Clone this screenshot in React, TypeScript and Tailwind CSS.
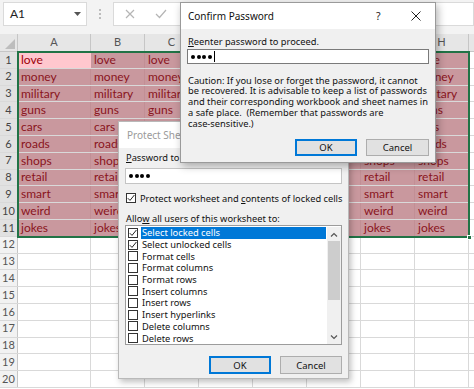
import React from "react";

const words = ["love", "money", "military", "guns", "cars", "roads", "shops", "retail", "smart", "weird", "jokes"];
const colWidths = [73, 54, 54, 54, 54, 54, 54, 54];
const colLetters = ["A", "B", "C", "D", "E", "F", "G", "H"];

const permissions = [
  { label: "Select locked cells", checked: true, active: true },
  { label: "Select unlocked cells", checked: true },
  { label: "Format cells" },
  { label: "Format columns" },
  { label: "Format rows" },
  { label: "Insert columns" },
  { label: "Insert rows" },
  { label: "Insert hyperlinks" },
  { label: "Delete columns" },
  { label: "Delete rows" },
];

const dialogFont = "[font-family:'Noto_Sans',sans-serif]";

function CheckBox({ checked }: { checked?: boolean }) {
  return (
    <span className="flex h-[10px] w-[10px] shrink-0 items-center justify-center border border-[#333333] bg-white">
      {checked && (
        <svg width="8" height="8" viewBox="0 0 8 8">
          <polyline points="0.8,4.2 3,6.4 7.4,1" fill="none" stroke="#222" strokeWidth="1" />
        </svg>
      )}
    </span>
  );
}

function DialogButton({ label, primary }: { label: string; primary?: boolean }) {
  return (
    <div
      className={`flex h-full w-full items-center justify-center bg-[#e1e1e1] text-[9.5px] text-[#111] ${
        primary ? "border-2 border-[#0078d7]" : "border border-[#adadad]"
      }`}
    >
      {label}
    </div>
  );
}

function PasswordDots({ caret }: { caret?: boolean }) {
  return (
    <div className="flex items-center gap-[1.5px] pl-[3px]">
      {[0, 1, 2, 3].map((i) => (
        <span key={i} className="h-[4px] w-[4px] rounded-full bg-black" />
      ))}
      {caret && <span className="ml-[1px] h-[11px] w-[1px] bg-black" />}
    </div>
  );
}

function Sheet() {
  return (
    <div className="flex flex-col">
      {/* name box + formula bar */}
      <div className="flex h-[34px] items-start bg-[#f3f3f3] pl-[3px] pt-[2px]">
        <div className="flex h-[24px] w-[84px] items-center justify-between border border-[#dadada] bg-white pl-[6px] pr-[5px] text-[12px] text-[#222]">
          <span>A1</span>
          <svg width="7" height="4" viewBox="0 0 7 4">
            <polygon points="0,0 7,0 3.5,4" fill="#555" />
          </svg>
        </div>
        <div className="flex h-[24px] w-[26px] flex-col items-center justify-center gap-[2px]">
          <span className="h-[2px] w-[2px] rounded-full bg-[#aaa]" />
          <span className="h-[2px] w-[2px] rounded-full bg-[#aaa]" />
          <span className="h-[2px] w-[2px] rounded-full bg-[#aaa]" />
        </div>
        <div className="flex h-[24px] flex-1 items-center border border-[#dadada] bg-white">
          <svg className="ml-[11px]" width="10" height="10" viewBox="0 0 10 10">
            <path d="M1 1 L9 9 M9 1 L1 9" stroke="#b5b5b5" strokeWidth="1.2" />
          </svg>
          <svg className="ml-[20px]" width="12" height="10" viewBox="0 0 12 10">
            <polyline points="1,5 4.5,8.5 11,1" fill="none" stroke="#b5b5b5" strokeWidth="1.2" />
          </svg>
        </div>
      </div>

      {/* column headers */}
      <div className="flex h-[18px] border-b border-[#c6c6c6] bg-[#e6e6e6] text-[11px] text-[#555]">
        <div className="relative w-[18px] shrink-0 border-r border-[#c6c6c6]">
          <svg className="absolute bottom-[2px] right-[2px]" width="10" height="10" viewBox="0 0 10 10">
            <polygon points="10,0 10,10 0,10" fill="#bdbdbd" />
          </svg>
        </div>
        {colWidths.map((w, i) => (
          <div
            key={i}
            className="flex shrink-0 items-center justify-center border-r border-[#c6c6c6]"
            style={{ width: w }}
          >
            {colLetters[i]}
          </div>
        ))}
        <div className="flex-1" />
      </div>

      {/* rows */}
      {Array.from({ length: 20 }).map((_, r) => {
        const selected = r < 11;
        return (
          <div key={r} className="flex h-[16.8px] border-b border-[#d9d9d9] text-[12px]">
            <div
              className={`flex w-[18px] shrink-0 items-center justify-center border-r border-[#c6c6c6] text-[11px] ${
                selected ? "bg-[#e1e1e1] text-[#444]" : "bg-[#f2f2f2] text-[#555]"
              }`}
            >
              {r + 1}
            </div>
            {colWidths.map((w, c) => {
              const isActive = r === 0 && c === 0;
              return (
                <div
                  key={c}
                  className={`flex shrink-0 items-center overflow-hidden whitespace-nowrap pl-[3px] ${
                    selected
                      ? isActive
                        ? "bg-[#ffc7ce] text-[#9c0006]"
                        : "border-r border-[#c28f95] bg-[#c9989e] text-[#8a1420]"
                      : "border-r border-[#d9d9d9]"
                  }`}
                  style={{ width: w }}
                >
                  {selected ? words[r] : ""}
                </div>
              );
            })}
            <div className="flex-1" />
          </div>
        );
      })}
    </div>
  );
}

function ProtectSheetDialog() {
  return (
    <div
      className={`absolute left-[118px] top-[121px] flex h-[258px] w-[231px] flex-col border border-[#b9b9b9] bg-[#f0f0f0] shadow-[2px_3px_6px_rgba(0,0,0,0.25)] ${dialogFont}`}
    >
      <div className="flex h-[26px] shrink-0 items-center bg-white pl-[8px] text-[10px] text-[#9a9a9a]">Protect Sheet</div>
      <div className="flex flex-col px-[6px] text-[9.3px] leading-[11px] text-[#111]">
        <div className="mt-[4px] whitespace-nowrap pl-[1px]">
          <span className="underline">P</span>assword to unprotect sheet:
        </div>
        <div className="mt-[5px] flex h-[16px] items-center border border-[#c4c4c4] bg-white">
          <PasswordDots />
        </div>
        <div className="mt-[8px] flex h-[12px] items-center gap-[4px] whitespace-nowrap pl-[1px]">
          <CheckBox checked />
          <span>
            Protect worksheet and <span className="underline">c</span>ontents of locked cells
          </span>
        </div>
        <div className="mt-[8.5px] whitespace-nowrap pl-[1px]">
          Allo<span className="underline">w</span> all users of this worksheet to:
        </div>
        <div className="mt-[1.5px] flex h-[120px] border border-[#9c9c9c] bg-white pt-[1px]">
          <div className="flex flex-1 flex-col">
            {permissions.map((p) => (
              <div key={p.label} className="flex h-[11.7px] items-center gap-[3px] pl-[2px]">
                <CheckBox checked={p.checked} />
                <span
                  className={`flex h-full flex-1 items-center whitespace-nowrap pl-[1px] ${
                    p.active ? "bg-[#0078d7] text-white" : ""
                  }`}
                >
                  {p.label}
                </span>
              </div>
            ))}
          </div>
          <div className="ml-[1px] flex w-[14px] flex-col bg-[#f0f0f0]">
            <div className="flex h-[14px] items-center justify-center">
              <svg width="8" height="5" viewBox="0 0 8 5">
                <polyline points="1,4.5 4,1.5 7,4.5" fill="none" stroke="#555" strokeWidth="1.2" />
              </svg>
            </div>
            <div className="mx-[1px] h-[59px] bg-[#cdcdcd]" />
            <div className="flex-1" />
            <div className="flex h-[14px] items-center justify-center">
              <svg width="8" height="5" viewBox="0 0 8 5">
                <polyline points="1,0.5 4,3.5 7,0.5" fill="none" stroke="#555" strokeWidth="1.2" />
              </svg>
            </div>
          </div>
        </div>
        <div className="mt-[11px] flex h-[18px] justify-end gap-[9px]">
          <div className="h-full w-[62px]">
            <DialogButton label="OK" primary />
          </div>
          <div className="h-full w-[62px]">
            <DialogButton label="Cancel" />
          </div>
        </div>
      </div>
    </div>
  );
}

function ConfirmPasswordDialog() {
  return (
    <div
      className={`absolute left-[180px] top-[2px] flex h-[161px] w-[256px] flex-col border border-[#9a9a9a] bg-[#f0f0f0] shadow-[2px_3px_8px_rgba(0,0,0,0.3)] ${dialogFont}`}
    >
      <div className="relative flex h-[26px] shrink-0 items-center bg-white pl-[7px] text-[10px] text-[#111]">
        Confirm Password
        <span className="absolute left-[195px] top-[6px] text-[10.5px] text-[#222]">?</span>
        <svg className="absolute left-[230px] top-[8px]" width="10" height="10" viewBox="0 0 10 10">
          <path d="M0.5 0.5 L9.5 9.5 M9.5 0.5 L0.5 9.5" stroke="#222" strokeWidth="1" />
        </svg>
      </div>
      <div className="flex flex-col px-[6px] text-[9.3px] leading-[11px] text-[#111]">
        <div className="mt-[6.5px] pl-[1px]">
          <span className="underline">R</span>eenter password to proceed.
        </div>
        <div className="mt-[2.5px] flex h-[15px] items-center border border-[#7a7a7a] bg-white">
          <PasswordDots caret />
        </div>
        <div className="mt-[11.5px] whitespace-pre pl-[1px] leading-[10.8px]">
          {"Caution: If you lose or forget the password, it cannot\nbe recovered. It is advisable to keep a list of passwords\nand their corresponding workbook and sheet names in\na safe place.  (Remember that passwords are\ncase-sensitive.)"}
        </div>
        <div className="mt-[9.5px] flex h-[17px] justify-end gap-[9px]">
          <div className="h-full w-[62px]">
            <DialogButton label="OK" primary />
          </div>
          <div className="h-full w-[63px]">
            <DialogButton label="Cancel" />
          </div>
        </div>
      </div>
    </div>
  );
}

export default function App() {
  return (
    <div className="relative h-[389px] w-[474px] overflow-hidden bg-white [font-family:Lato,sans-serif]">
      <Sheet />
      {/* selection outline A1:H11 */}
      <div className="pointer-events-none absolute left-[17px] top-[51px] h-[187px] w-[453px] border-2 border-[#217346]" />
      <div className="absolute left-[467px] top-[235px] h-[5px] w-[5px] border border-white bg-[#217346]" />
      <ProtectSheetDialog />
      <ConfirmPasswordDialog />
    </div>
  );
}
